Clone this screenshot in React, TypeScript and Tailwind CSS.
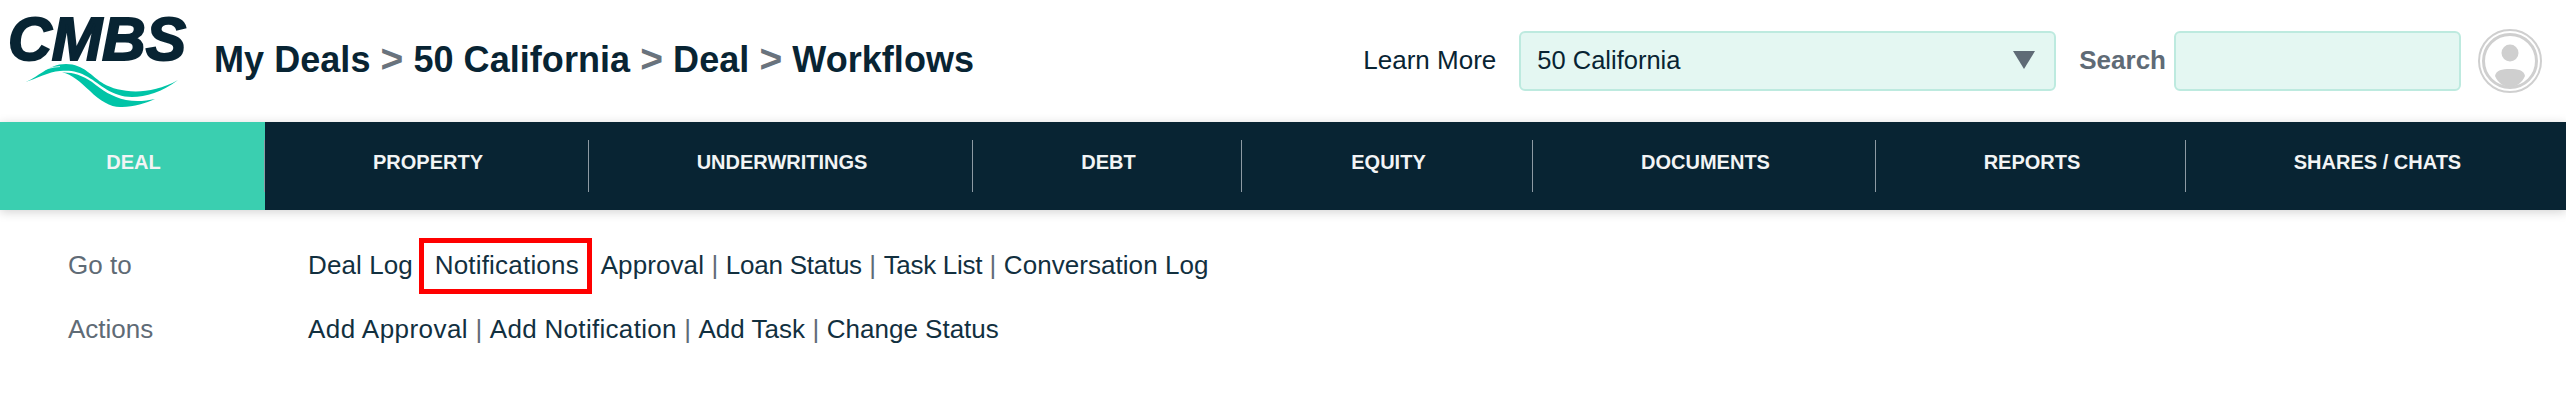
const navItems = [
  { label: 'DEAL', width: 'w-[265px]', active: true },
  { label: 'PROPERTY', width: 'w-[324px]' },
  { label: 'UNDERWRITINGS', width: 'w-[384px]' },
  { label: 'DEBT', width: 'w-[269px]' },
  { label: 'EQUITY', width: 'w-[291px]' },
  { label: 'DOCUMENTS', width: 'w-[343px]' },
  { label: 'REPORTS', width: 'w-[310px]' },
  { label: 'SHARES / CHATS', width: 'w-[380px]', last: true },
]

function Logo() {
  return (
    <svg width="190" height="122" viewBox="0 0 190 122" className="shrink-0">
      <text
        x="8"
        y="60"
        fontFamily="Liberation Sans, Arial, sans-serif"
        fontSize="61"
        fontWeight="700"
        fontStyle="italic"
        fill="#082433"
        stroke="#082433"
        strokeWidth="2"
        textLength="178"
        lengthAdjust="spacingAndGlyphs"
      >
        CMBS
      </text>
      <path
        d="M23 83 C38 78 48 64 66 64 C84 64 92 77 104 84 C118 92 148 97 178 80 C162 92 146 97 132 97 C112 97 100 84 88 77 C78 71 70 70 60 71 C48 72 38 78 23 83 Z"
        fill="#00c4a7"
      />
      <path
        d="M62 72.5 C72 74 80 82 90 91 C100 101 112 108 122 107 C134 107 146 103 155 99 C146 101 136 102 126 100 C112 97 102 90 92 82 C82 75 72 72 62 72.5 Z"
        fill="#00c4a7"
      />
      <path d="M37 73 C44 69 52 67 60 66.5" fill="none" stroke="#ffffff" strokeWidth="0.8" />
    </svg>
  )
}

function Avatar() {
  return (
    <svg width="64" height="64" viewBox="0 0 64 64" className="shrink-0">
      <circle cx="32" cy="32" r="31" fill="none" stroke="#cfcfcf" strokeWidth="2" />
      <circle cx="32" cy="32" r="26.5" fill="none" stroke="#cfcfcf" strokeWidth="3" />
      <circle cx="32" cy="24" r="8.5" fill="#cfcfcf" />
      <path d="M17 47 C18 41 24 40 32 40 C40 40 46 41 47 47 C44 54 38 58 32 58 C26 58 20 54 17 47 Z" fill="#cfcfcf" />
    </svg>
  )
}

function Sep({ hidden }: { hidden?: boolean }) {
  return <span className={hidden ? 'text-transparent' : 'text-[#5f6b76]'}>|</span>
}

export default function App() {
  return (
    <div className="w-[2566px] h-[402px] bg-white overflow-hidden font-['Liberation_Sans',Arial,sans-serif] text-[#082433]">
      <header className="h-[122px] flex items-center">
        <Logo />
        <h1 className="ml-[24px] mt-[-2px] text-[36px] font-bold whitespace-nowrap tracking-[0.05px]">
          My Deals <span className="text-[39px] leading-none text-[#69737d]">&gt;</span> 50 California{' '}
          <span className="text-[39px] leading-none text-[#69737d]">&gt;</span> Deal{' '}
          <span className="text-[39px] leading-none text-[#69737d]">&gt;</span> Workflows
        </h1>
        <div className="ml-auto flex items-center">
          <span className="text-[26px] whitespace-nowrap pb-[2px]">Learn More</span>
          <div className="ml-[23px] w-[537px] h-[60px] rounded-[6px] border-2 border-[#bdeadf] bg-[#e4f7f2] flex items-center justify-between pl-[16px] pr-[19px] pb-[2px] text-[25.5px]">
            50 California
            <span className="w-0 h-0 border-x-[11px] border-x-transparent border-t-[18px] border-t-[#5f6b76]" />
          </div>
          <span className="ml-[23px] text-[26px] font-bold text-[#5f6b76] pb-[2px]">Search</span>
          <div className="ml-[8px] w-[287px] h-[60px] rounded-[6px] border-2 border-[#bdeadf] bg-[#e4f7f2]" />
          <div className="ml-[17px] mr-[24px]">
            <Avatar />
          </div>
        </div>
      </header>

      <nav className="h-[88px] flex bg-[#082433] shadow-[0_2px_10px_rgba(0,0,0,0.18)]">
        {navItems.map((item) => (
          <div key={item.label} className={`${item.width} flex items-center ${item.active ? 'bg-[#3acfb0]' : ''}`}>
            <div
              className={`w-full h-[52px] flex items-center justify-center pb-[8px] pl-[3px] text-[20px] font-bold text-[#f2f4f5] ${
                item.last ? '' : 'border-r border-[#8d9aa3]'
              }`}
            >
              {item.label}
            </div>
          </div>
        ))}
      </nav>

      <div className="pl-[68px] pt-[32px] text-[26px]">
        <div className="flex h-[64px] items-start leading-[46px]">
          <span className="w-[240px] text-[#5f6b76]">Go to</span>
          <div className="flex gap-[7.5px] whitespace-nowrap text-[#12303f]">
            <span className="tracking-[0.1px]">Deal Log</span>
            <Sep hidden />
            <span className="relative tracking-[0.2px]">
              Notifications
              <span className="absolute left-[-16px] right-[-13px] top-[-4px] h-[56px] border-[5px] border-[#ff0000]" />
            </span>
            <Sep hidden />
            <span className="tracking-[0.1px]">Approval</span>
            <Sep />
            <span className="tracking-[-0.25px]">Loan Status</span>
            <Sep />
            <span className="tracking-[-0.3px]">Task List</span>
            <Sep />
            <span className="tracking-[0.05px]">Conversation Log</span>
          </div>
        </div>
        <div className="flex items-start leading-[46px]">
          <span className="w-[240px] text-[#5f6b76]">Actions</span>
          <div className="flex gap-[7.5px] whitespace-nowrap text-[#12303f]">
            <span className="tracking-[0.45px]">Add Approval</span>
            <Sep />
            <span className="tracking-[0.3px]">Add Notification</span>
            <Sep />
            <span>Add Task</span>
            <Sep />
            <span>Change Status</span>
          </div>
        </div>
      </div>
    </div>
  )
}
